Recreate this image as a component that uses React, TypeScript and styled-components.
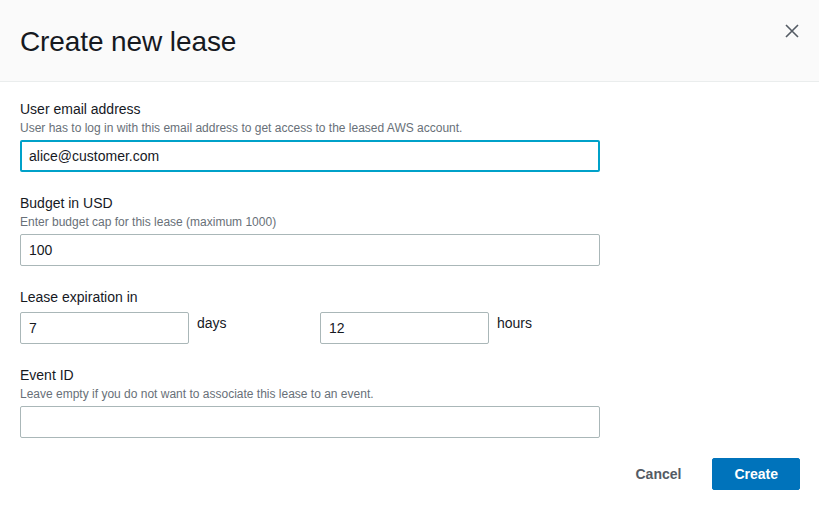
import React from "react";
import styled, { createGlobalStyle } from "styled-components";

const Global = createGlobalStyle`
  html, body { margin: 0; padding: 0; background: #ffffff; }
  body { font-family: "Liberation Sans", Arial, sans-serif; color: #16191f; }
  * { box-sizing: border-box; }
`;

const Modal = styled.div`
  width: 819px;
  height: 508px;
  background: #ffffff;
  display: flex;
  flex-direction: column;
`;

const Header = styled.header`
  height: 82px;
  background: #fafafa;
  border-bottom: 1px solid #eaeded;
  display: flex;
  align-items: flex-start;
  justify-content: space-between;
  padding: 27px 20px 0 20px;
`;

const Title = styled.h1`
  margin: 0;
  font-size: 28px;
  font-weight: 400;
  line-height: 30px;
  color: #16191f;
  letter-spacing: -0.1px;
`;

const Close = styled.button`
  border: none;
  background: transparent;
  padding: 0;
  margin-top: -4px;
  margin-right: -1px;
  width: 16px;
  height: 16px;
  display: flex;
  align-items: center;
  justify-content: center;
  cursor: pointer;
`;

const Body = styled.div`
  padding: 16px 20px 0 20px;
  display: flex;
  flex-direction: column;
  gap: 20px;
`;

const Field = styled.div`
  display: flex;
  flex-direction: column;
  width: 580px;
`;

const Label = styled.label`
  font-size: 14px;
  line-height: 22px;
  color: #16191f;
`;

const Description = styled.div`
  font-size: 12px;
  line-height: 16px;
  color: #687078;
  margin-bottom: 4px;
`;

const Input = styled.input<{ $focused?: boolean }>`
  height: 32px;
  width: 100%;
  border-radius: 2px;
  font-family: "Liberation Sans", Arial, sans-serif;
  font-size: 14px;
  color: #16191f;
  outline: none;
  background: #ffffff;
  border: ${(p) => (p.$focused ? "2px solid #00a1c9" : "1px solid #aab7b8")};
  padding: ${(p) => (p.$focused ? "0 7px" : "0 8px")};
`;

const Row = styled.div`
  display: flex;
  margin-top: 4px;
`;

const Group = styled.div`
  flex: 0 0 300px;
  display: flex;
  align-items: flex-start;
  gap: 8px;
`;

const SmallInput = styled(Input)`
  width: 169px;
  flex: 0 0 169px;
`;

const Unit = styled.span`
  font-size: 14px;
  line-height: 22px;
  color: #16191f;
`;

const Footer = styled.div`
  display: flex;
  justify-content: flex-end;
  align-items: center;
  gap: 9px;
  padding: 20px 19px 0 20px;
`;

const Button = styled.button<{ $primary?: boolean }>`
  height: 32px;
  padding: 0 21px;
  border-radius: 2px;
  font-family: "Liberation Sans", Arial, sans-serif;
  font-size: 14px;
  font-weight: 700;
  cursor: pointer;
  border: 1px solid ${(p) => (p.$primary ? "#0073bb" : "transparent")};
  background: ${(p) => (p.$primary ? "#0073bb" : "transparent")};
  color: ${(p) => (p.$primary ? "#ffffff" : "#545b64")};
`;

export default function App() {
  return (
    <>
      <Global />
      <Modal>
        <Header>
          <Title>Create new lease</Title>
          <Close aria-label="Close">
            <svg width="14" height="14" viewBox="0 0 14 14">
              <path d="M1 1 L13 13 M13 1 L1 13" stroke="#545b64" strokeWidth="1.6" fill="none" />
            </svg>
          </Close>
        </Header>
        <Body>
          <Field>
            <Label>User email address</Label>
            <Description>User has to log in with this email address to get access to the leased AWS account.</Description>
            <Input $focused defaultValue="alice@customer.com" />
          </Field>
          <Field>
            <Label>Budget in USD</Label>
            <Description>Enter budget cap for this lease (maximum 1000)</Description>
            <Input defaultValue="100" />
          </Field>
          <Field>
            <Label>Lease expiration in</Label>
            <Row>
              <Group>
                <SmallInput defaultValue="7" />
                <Unit>days</Unit>
              </Group>
              <Group>
                <SmallInput defaultValue="12" />
                <Unit>hours</Unit>
              </Group>
            </Row>
          </Field>
          <Field>
            <Label>Event ID</Label>
            <Description>Leave empty if you do not want to associate this lease to an event.</Description>
            <Input />
          </Field>
        </Body>
        <Footer>
          <Button>Cancel</Button>
          <Button $primary>Create</Button>
        </Footer>
      </Modal>
    </>
  );
}
